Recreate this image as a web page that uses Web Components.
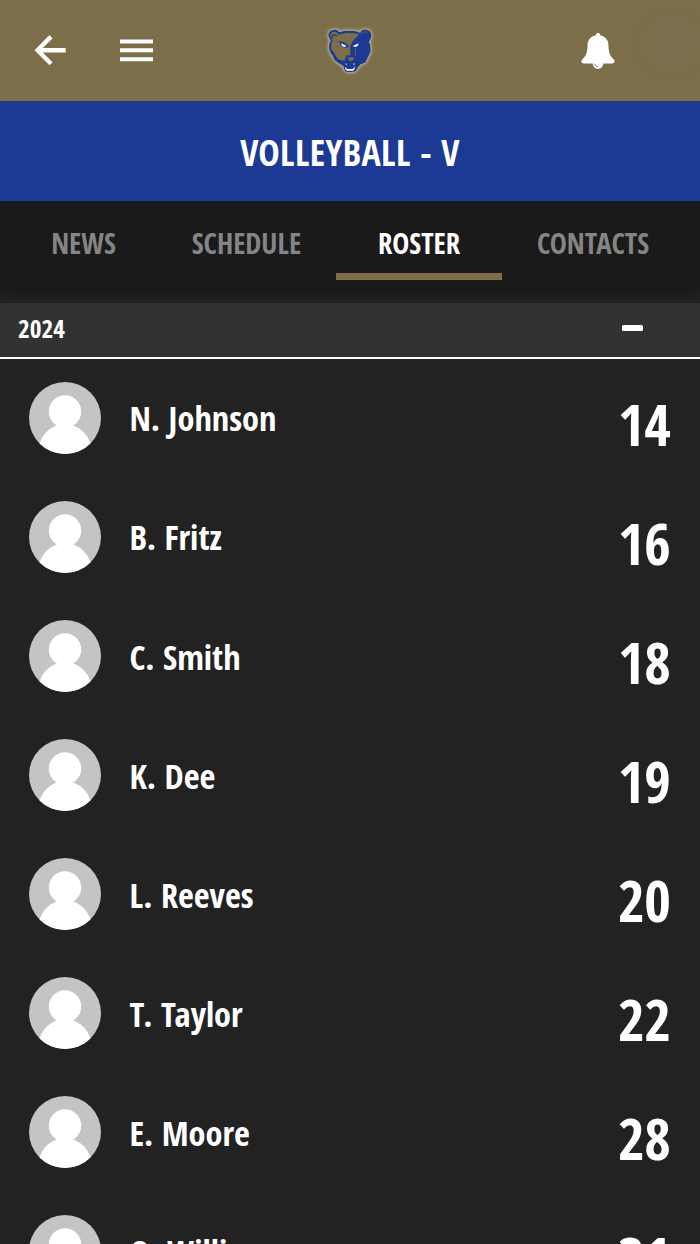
<!DOCTYPE html>
<html lang="en">
<head>
<meta charset="utf-8">
<title>Volleyball - V</title>
<style>
  html {
    background: #222;
  }
  body {
    margin: 0;
    height: 1244px;
    overflow: hidden;
    background: #222;
    color: #fff;
    font-family: "Open Sans Condensed", "Open Sans", "Liberation Sans", sans-serif;
    font-stretch: 75%;
    font-weight: 700;
  }
</style>
</head>
<body>
<team-app>
  <app-bar slot="bar"></app-bar>
  <page-title slot="title">VOLLEYBALL - V</page-title>
  <tab-bar slot="tabs">
    <tab-item style="width: 147px">NEWS</tab-item>
    <tab-item style="width: 179px">SCHEDULE</tab-item>
    <tab-item style="width: 166px" active>ROSTER</tab-item>
    <tab-item style="width: 182px">CONTACTS</tab-item>
  </tab-bar>
  <season-header>2024</season-header>
  <player-row number="14">N. Johnson</player-row>
  <player-row number="16">B. Fritz</player-row>
  <player-row number="18">C. Smith</player-row>
  <player-row number="19">K. Dee</player-row>
  <player-row number="20">L. Reeves</player-row>
  <player-row number="22">T. Taylor</player-row>
  <player-row number="28">E. Moore</player-row>
  <player-row number="31">O. Willi</player-row>
</team-app>
<script>
/**
 * Shared base, renders the html getter into an open shadowRoot
 */
class TeamElement extends HTMLElement {
  constructor() {
    super();
    this.template = document.createElement("template");
    this.attachShadow({ mode: "open" });
  }
  connectedCallback() {
    this.render();
  }
  render() {
    this.shadowRoot.innerHTML = "";
    this.template.innerHTML = this.html;
    this.shadowRoot.appendChild(this.template.content.cloneNode(true));
  }
}

/**
 * `team-app`
 * page shell
 */
class TeamApp extends TeamElement {
  static get tag() {
    return "team-app";
  }
  get html() {
    return `
    <style>
      :host {
        display: flex;
        flex-direction: column;
        height: 1244px;
        overflow: hidden;
      }
      main {
        display: flex;
        flex-direction: column;
        padding-top: 14px;
      }
    </style>
    <slot name="bar"></slot>
    <slot name="title"></slot>
    <slot name="tabs"></slot>
    <main><slot></slot></main>`;
  }
}
customElements.define(TeamApp.tag, TeamApp);

/**
 * `bear-logo`
 */
class BearLogo extends TeamElement {
  static get tag() {
    return "bear-logo";
  }
  get html() {
    return `
    <style>
      :host {
        display: block;
        width: 60px;
        height: 60px;
      }
      svg {
        display: block;
        overflow: visible;
        filter: drop-shadow(0 0 1.5px rgba(240, 232, 210, 0.75)) drop-shadow(0 0 2px rgba(240, 232, 210, 0.45));
      }
    </style>
    <svg width="60" height="60" viewBox="0 0 180 180">
      <path fill="#1c3a94" d="M25 47C26 33 38 27 50 30L59 37C75 31 105 31 120 38C126 26 143 25 151 36C157 46 153 57 147 65C153 80 154 97 145 109L137 127L120 134L112 145L107 154L89 157L75 154L70 138L54 128L43 119L38 107C26 94 24 77 32 63Z"/>
      <path fill="#7b6e48" d="M32 53C27 40 38 33 48 36L57 44C71 38 98 37 118 42L104 57L97 65L91 78V106H80L74 122L58 119L49 112L43 100C31 88 31 73 38 61Z"/>
      <path fill="none" stroke="#1c3a94" stroke-width="4" d="M37 55C34 44 43 40 51 48"/>
      <path fill="none" stroke="#7b6e48" stroke-width="2.5" d="M122 43C129 34 139 33 144 40M106 84V106"/>
      <path fill="#1c3a94" d="M56 62L77 69L87 79L80 84L64 79ZM122 62L103 69L94 80L102 84L117 78Z"/>
      <path fill="#fff" d="M63 70L80 78L73 81L66 78ZM116 70L98 78L105 81L113 78Z"/>
      <path fill="#7b6e48" d="M83 112H103L99 121L93 124L86 120Z"/>
      <path fill="#1c3a94" d="M76 108H106L104 112H80Z"/>
      <path fill="#fff" d="M75 141L81 147H99L105 139L104 147L99 152H81L76 148ZM76 130L80 131L79 137ZM104 129L100 131L102 137Z"/>
    </svg>`;
  }
}
customElements.define(BearLogo.tag, BearLogo);

/**
 * `app-bar`
 * back, menu, logo and notifications
 */
class AppBar extends TeamElement {
  static get tag() {
    return "app-bar";
  }
  get html() {
    return `
    <style>
      :host {
        display: grid;
        grid-template-columns: 1fr 60px 1fr;
        align-items: center;
        flex: none;
        height: 100.5px;
        box-sizing: border-box;
        background: radial-gradient(ellipse 42px 38px at 673px 43px, #7b7150 0, #7a6f4c 70%, transparent 100%), #7b6e48;
      }
      .left {
        display: flex;
        align-items: center;
        gap: 54px;
        padding-left: 34px;
      }
      .right {
        display: flex;
        justify-content: flex-end;
        padding: 2px 85.5px 0 0;
      }
      svg {
        display: block;
      }
    </style>
    <div class="left">
      <svg width="32" height="32" viewBox="0 0 32 32" fill="none" stroke="#fff" stroke-width="4.4">
        <path d="M17 2.6L3.6 16.2L17 29.8M3.6 16.2H31.7"/>
      </svg>
      <svg width="33" height="24" viewBox="0 0 33 24" fill="#fff">
        <path d="M0 1.4h33v4H0zM0 10.3h33v4H0zM0 19.2h33v4H0z"/>
      </svg>
    </div>
    <bear-logo></bear-logo>
    <div class="right">
      <svg width="34" height="38" viewBox="0 0 34 38">
        <path fill="#fff" d="M14.9 3.2C14.4 .3 19.6 .3 19.1 3.2C24.2 4.2 27.2 8 27.4 12.5C27.6 20 28.5 23.5 32.6 27.2C34.5 29 33.3 31.5 31.2 31.5H22.3C22 34.7 19.8 36.9 17 36.9S12 34.7 11.7 31.5H2.8C.7 31.5 -.5 29 1.4 27.2C5.5 23.5 6.4 20 6.6 12.5C6.8 8 9.8 4.2 14.9 3.2Z"/>
        <path fill="none" stroke="#7b6e48" stroke-width=".9" d="M13.7 31.8C14 33.7 15.2 34.9 17 35"/>
      </svg>
    </div>`;
  }
}
customElements.define(AppBar.tag, AppBar);

/**
 * `page-title`
 */
class PageTitle extends TeamElement {
  static get tag() {
    return "page-title";
  }
  get html() {
    return `
    <style>
      :host {
        display: flex;
        flex: none;
        align-items: center;
        justify-content: center;
        height: 100.5px;
        box-sizing: border-box;
        padding-top: 4px;
        background: #1c3a94;
        font-size: 36px;
        letter-spacing: 0.4px;
        line-height: 1;
      }
    </style>
    <slot></slot>`;
  }
}
customElements.define(PageTitle.tag, PageTitle);

/**
 * `tab-bar`
 */
class TabBar extends TeamElement {
  static get tag() {
    return "tab-bar";
  }
  get html() {
    return `
    <style>
      :host {
        display: flex;
        flex: none;
        box-sizing: border-box;
        height: 88px;
        padding-left: 10px;
        background: #1a1a1a;
        box-shadow: 0 4px 12px rgba(0, 0, 0, 0.35);
        clip-path: inset(0 0 -14px 0);
      }
    </style>
    <slot></slot>`;
  }
}
customElements.define(TabBar.tag, TabBar);

class TabItem extends TeamElement {
  static get tag() {
    return "tab-item";
  }
  get html() {
    return `
    <style>
      :host {
        display: flex;
        flex-direction: column;
        align-items: center;
        height: 79px;
        color: #858585;
        font-size: 28.7px;
        line-height: 72px;
        padding-top: 6px;
        box-sizing: border-box;
        border-bottom: 7px solid transparent;
      }
      :host([active]) {
        color: #fff;
        border-bottom-color: #7b6e48;
      }
    </style>
    <slot></slot>`;
  }
}
customElements.define(TabItem.tag, TabItem);

/**
 * `season-header`
 * collapsible section heading
 */
class SeasonHeader extends TeamElement {
  static get tag() {
    return "season-header";
  }
  get html() {
    return `
    <style>
      :host {
        display: flex;
        flex: none;
        align-items: center;
        justify-content: space-between;
        height: 56px;
        box-sizing: border-box;
        padding: 0 57.5px 3px 18px;
        background: #323232;
        border-bottom: 2px solid #fff;
        font-size: 25.3px;
        line-height: 1;
      }
      .minus {
        width: 20.5px;
        height: 6px;
        margin-bottom: 1px;
        border-radius: 1.5px;
        background: #fff;
      }
    </style>
    <slot></slot>
    <div class="minus"></div>`;
  }
}
customElements.define(SeasonHeader.tag, SeasonHeader);

/**
 * `player-row`
 * avatar, name and jersey number
 */
class PlayerRow extends TeamElement {
  static get tag() {
    return "player-row";
  }
  get number() {
    return this.getAttribute("number");
  }
  get html() {
    return `
    <style>
      :host {
        display: flex;
        flex: none;
        align-items: center;
        height: 119.1px;
        box-sizing: border-box;
        padding: 0 29.4px 1px 28.7px;
        border-bottom: 1px solid #1e1e1e;
      }
      svg {
        display: block;
        width: 72px;
        height: 72px;
      }
      .name {
        flex: 1;
        padding: 2px 0 0 28.7px;
        font-size: 34.3px;
        line-height: 1;
      }
      .number {
        padding-top: 14px;
        font-size: 57.5px;
        line-height: 1;
        letter-spacing: -0.3px;
      }
    </style>
    <svg viewBox="0 0 72 72">
      <clipPath id="round"><circle cx="36" cy="36" r="36"/></clipPath>
      <g clip-path="url(#round)">
        <rect width="72" height="72" fill="#c4c4c4"/>
        <circle cx="36" cy="29.5" r="16.2" fill="#fff"/>
        <ellipse cx="36" cy="71" rx="27" ry="29" fill="#fff"/>
      </g>
    </svg>
    <div class="name"><slot></slot></div>
    <div class="number">${this.number}</div>`;
  }
}
customElements.define(PlayerRow.tag, PlayerRow);
</script>
</body>
</html>
